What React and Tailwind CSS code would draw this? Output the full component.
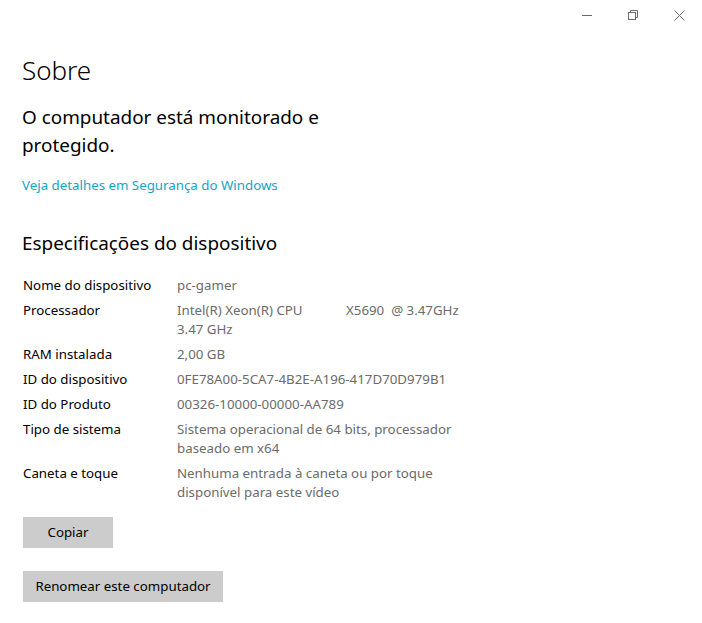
import React from "react";

const specs = [
	{ label: "Nome do dispositivo", value: "pc-gamer" },
	{ label: "Processador", value: "cpu" },
	{ label: "RAM instalada", value: "2,00 GB" },
	{ label: "ID do dispositivo", value: "0FE78A00-5CA7-4B2E-A196-417D70D979B1" },
	{ label: "ID do Produto", value: "00326-10000-00000-AA789" },
	{ label: "Tipo de sistema", value: "Sistema operacional de 64 bits, processador baseado em x64" },
	{ label: "Caneta e toque", value: "Nenhuma entrada à caneta ou por toque disponível para este vídeo" },
];

const TitleBar = () => (
	<div className="flex justify-end h-[30px] text-[#6b6b6b]">
		<div className="w-[46px] h-[30px] flex items-center justify-center">
			<svg width="10" height="10" viewBox="0 0 10 10">
				<path d="M0 5.5h10" stroke="currentColor" strokeWidth="1" />
			</svg>
		</div>
		<div className="w-[46px] h-[30px] flex items-center justify-center">
			<svg width="10" height="10" viewBox="0 0 10 10" fill="none">
				<rect x="0.5" y="2.5" width="7" height="7" stroke="currentColor" />
				<path d="M2.5 2.5V0.5h7v7h-2" stroke="currentColor" />
			</svg>
		</div>
		<div className="w-[46px] h-[30px] flex items-center justify-center">
			<svg width="11" height="11" viewBox="0 0 11 11">
				<path d="M0.5 0.5l10 10M10.5 0.5l-10 10" stroke="currentColor" strokeWidth="1" />
			</svg>
		</div>
	</div>
);

const App = () => {
	return (
		<div className="w-[702px] h-[623px] bg-white text-black overflow-hidden" style={{ fontFamily: '"Noto Sans", "Open Sans", sans-serif' }}>
			<TitleBar />
			<div className="pl-[22px] pt-[22px]">
				<h1 className="text-[26px] leading-[36px] font-light">Sobre</h1>
				<p className="mt-[15px] text-[18.9px] leading-[28px] w-[310px]">O computador está monitorado e protegido.</p>
				<a className="block mt-[16px] text-[13.3px] leading-[20px] text-[#11a6c4]">Veja detalhes em Segurança do Windows</a>

				<h2 className="mt-[34px] text-[18.9px] leading-[28px]">Especificações do dispositivo</h2>

				<div className="mt-[19px] flex flex-col gap-[6px] text-[13.3px] leading-[19px] pl-px">
					{specs.map((s, i) => (
						<div key={`spec_${i}`} className="flex">
							<div className="w-[154px] shrink-0">{s.label}</div>
							<div className="w-[290px] text-[#6b6b6b]">
								{s.value === "cpu" ? (
									<>
										<span className="inline-block w-[169px]">Intel(R) Xeon(R) CPU</span>
										<span className="whitespace-pre">X5690  @ 3.47GHz</span>
										<br />
										3.47 GHz
									</>
								) : (
									s.value
								)}
							</div>
						</div>
					))}
				</div>

				<button className="mt-[15px] block w-[90px] h-[31px] bg-[#cccccc] text-[13.3px] ml-px">Copiar</button>
				<button className="mt-[23px] block w-[200px] h-[31px] bg-[#cccccc] text-[13.3px] ml-px">Renomear este computador</button>
			</div>
		</div>
	);
};

export default App;
